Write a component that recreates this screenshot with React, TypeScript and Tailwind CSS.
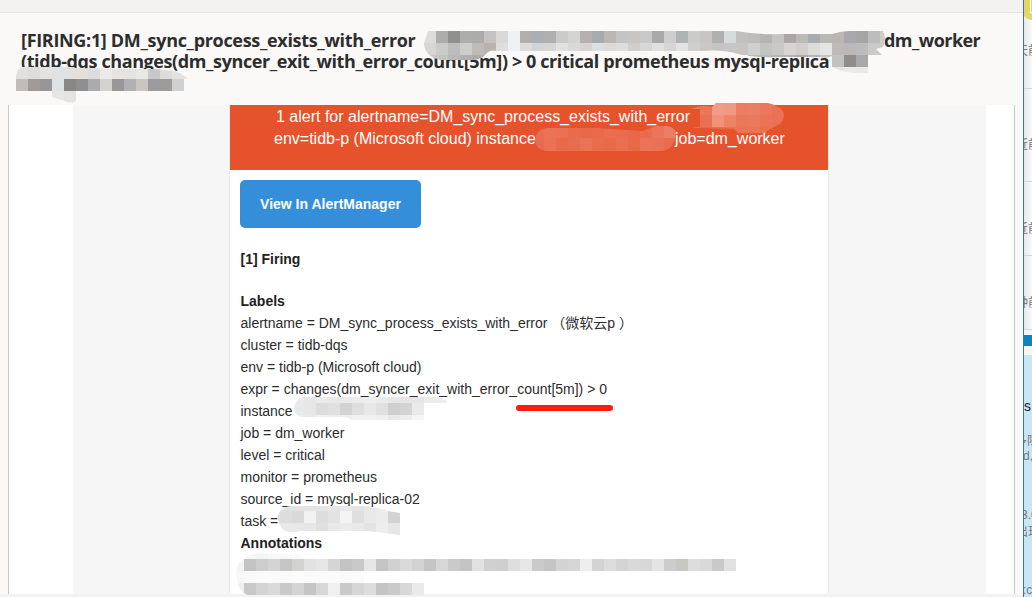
interface MosaicProps {
  id: string
  x: number
  y: number
  rows: string[]
  shape: string
}

const CELL = 12

// every row is a list of colours, one for each 12px cell, "-" leaves a hole
function Mosaic({ id, x, y, rows, shape }: MosaicProps) {
  return (
    <g clipPath={`url(#${id})`} shapeRendering="crispEdges">
      <clipPath id={id}>
        <path d={shape} />
      </clipPath>
      {rows.map((row, r) =>
        row.split(' ').map((color, c) =>
          color === '-' ? null : (
            <rect key={`${r}-${c}`} x={x + c * CELL} y={y + r * CELL} width={CELL} height={CELL} fill={`#${color}`} />
          )
        )
      )}
    </g>
  )
}

const mosaics: MosaicProps[] = [
  {
    id: 'subject-top',
    x: 424,
    y: 31,
    rows: [
      'dcdcdc adadab 90908e adadab acacab c4c3c1 dbd9d7 eef1f3 b1aeab a9afb4 b0b0b0 cbcbca d4d4d3 b5b1ae a7abae b9b8b5 c4c4c4 c8c5c3 c8c8c8 a9a9a8 cecece b0b3b4 cbcbca c8c6c4 b0b0ae d8dbdd c2c0bd bfbdb9 b5b4b2 c6c4c0 aaa7a4 bcbab7 a9acae b9b8b5 bab6b1 a9a9ad a5a5a8 bdbdbd d0cbc4',
      'd6d6d6 cbcbca bdbdbb cdcdcc c0bbb9 b9b3b0 dedede eef1f3 dedcda d2d4d6 d6d6d6 e1e1e0 dad9d8 d6d3d1 dce0e2 dcdbd9 dedede d0cecc d7d7d7 e0e0e0 d6d6d6 e2e2e2 cecece cac7c5 c4c4c2 c6c6c5 c7c5c2 cfd0d0 c3c3c1 c9c9c7 d7d5d3 d1cecb dcdcdb e5e5e5 bebab7 bbb8b7 bcbcbf cacaca d0cbc4',
      'c8c8c8 c4c4c4 b8b8b8 b0b0b4 acacab b5b5b3 - - - - - - - - - - - - - - - - - - - - - b9b9b8 b9b9b8 b5b5b4 b4b3b2 acacab b3b3b2 c4c4c3 d9d9db e1e1e1 dbdbdb e4e4e4 e6e6e6',
    ],
    shape:
      'M428 31 L736 31 Q758 35 780 34 L832 34 Q842 31 850 31 L883 31 Q887 40 883 47 L876 49 L882 55 L834 55 Q828 59 820 57 L782 57 Q754 58 738 54 Q724 49 700 51 L496 51 Q490 49 486 54 Q481 60 472 60 L440 60 Q424 56 424 43 Z',
  },
  {
    id: 'subject-right',
    x: 832,
    y: 55,
    rows: ['c2c2c0 8f8d8c a9a9a9 b3b4b6', 'e4e4e4 e9e9e9 e9e9e9 eeeeee'],
    shape: 'M832 55 H868 V73 Q846 74 832 67 Z',
  },
  {
    id: 'subject-bottom',
    x: 16,
    y: 67,
    rows: [
      'e1e0df dedddc e4e3e2 e0e1e2 e2e1e0 e6e0da dcdcdd ecebea e5e4e3 e4e4e3 e8e8e6 c8c8c8 dddcdb e2e2e2 e9e9e8',
      'bfbdb9 9f9b98 989795 dfe2e5 888785 8f8f92 aaabad d5d1cd 999896 afb1b4 c9c6bf 999b9e 9f9a96 ced0d2 -',
      '- - - e6e5e4 e3e3e2 e9e9e8 f3f3f2 - - - - - - - -',
      '- - - ebebea e5e5e4 e7e7e6 - - - - - - - - -',
    ],
    shape: 'M16 75 Q18 66 26 66 L66 66 L76 68 L146 69 Q180 68 188 79 L184 79 V91 H76 V101 Q70 104 65 101 L52 97 V91 H16 Z',
  },
  {
    id: 'banner-top',
    x: 688,
    y: 103,
    rows: [
      'e97358 e97759 ef9d88 f09a85 eb7d62 ec7e63 eb785c ea7356',
      'e86e4f e87153 ef937b ed8468 eb7759 eb7a5d eb7356 ea7153',
      'e86848 e86948 e97152 e97051 ea7454 ea7556 e97152 e86c4d',
    ],
    shape: 'M690 109 Q702 104 712 107 L716 103 L768 103 Q784 107 784 116 Q783 124 774 127 L764 133 L738 133 L734 129 L696 128 L692 127 L700 127 V109 Z',
  },
  {
    id: 'banner-bottom',
    x: 532,
    y: 126,
    rows: [
      'e96d50 ea7356 ea7154 e96b4d e9684a e86a4c e96e50 e96c4d e96849 ea6c4e eb755a ed7e64 ec775c',
      'e86d50 ea7153 ea6948 e86c4f ea7355 e96c4e e96948 ea6e51 e96848 ea7256 ea7156 ea6c4e ea6948',
      'e86d50 ea7153 ea6948 e86c4f ea7355 e96c4e e96948 ea6e51 e96848 ea7256 ea7156 ea6c4e ea6948',
    ],
    shape: 'M535 139 Q537 129 547 128 L596 128 L642 131 L656 126 Q672 124 676 132 Q675 150 661 151 L546 151 Q535 149 535 139 Z',
  },
  {
    id: 'instance',
    x: 292,
    y: 391,
    rows: [
      'e9e9e9 e6e6e6 ebebeb e9e9e9 eaeaea ececec eeeeee ebebeb e7e7e7 e6e6e6 e6e6e6 ebebeb ebebeb',
      'e9e9e9 e6e6e6 dcdcdc e0e0e0 d2d2d2 dedede e8e8e8 e0e0e0 cfcfcf d3d3d3 e9e9e9 - -',
      'f0f0f0 e9e9e9 eeeeee eeeeee ededed f1f1f1 f1f1f1 efefef e9e9e9 ededed f5f5f5 - -',
    ],
    shape: 'M294 409 Q295 398 304 397 L436 397 Q445 398 447 403 L424 403 V420 L352 420 L346 417 L302 417 Q294 415 294 409 Z',
  },
  {
    id: 'task',
    x: 268,
    y: 499,
    rows: [
      'e3e3e3 e3e3e3 e3e3e3 e3e3e3 e6e6e6 e6e6e6 e8e8e8 e3e3e3 e7e7e7 ebebeb e9e9e9 e9e9e9',
      'e0e0e0 dddddd d9d9d9 f2f2f2 dddddd e3e3e3 f4f4f4 dfdfdf e9e9e9 ececec d3d3d3 -',
      'e8e8e8 e8e8e8 e8e8e8 e6e6e6 dfdfdf e9e9e9 ebebeb e9e9e9 e3e3e3 ededed e7e7e7 -',
    ],
    shape: 'M277 518 Q280 506 292 506 L364 506 Q380 508 388 511 L400 513 V535 L384 533 L368 531 L300 531 Q282 536 279 522 Z',
  },
  {
    id: 'annotation-top',
    x: 232,
    y: 547,
    rows: [
      'f8f8f8 f6f6f6 f5f5f5 f8f8f8 f8f8f8 fafafa fafafa - - - - - - - - - - - - - - - - - - - - - - - - - - - - - - - - - - - - -',
      'f4f4f4 c3c3c3 cdcdcd d4d4d4 c6c6c6 d2d2d0 e2e2e2 e6e6e6 d5d5d5 c3c3c3 c9c9c9 e7e7e7 c5c5c5 d1d1d1 dadada d2d2d2 c5c5c5 d7d7d7 cacaca c4c4c4 e1e1e1 d0d0d0 cfcfcf dedede e7e7e7 cacaca c5c5c5 d3d3d3 d6d6d6 eeeeee d3d3d3 dcdcdc d4d4d4 d9d9d9 d8d8d8 e4e4e4 cccccc c7c7c4 dddddd d9d9d9 c9c9c9 e1e1e1',
      'f7f7f7 f9f9f9 fafafa fafafa fafafa fbfbfb fafafa fbfbfb fbfbfb fafafa fbfbfb - - - - - - - - - - - - - - - - - - - - - - - - - - - - - - -',
      'f0f0f0 c8c8c8 d4d4d4 dadada c9c9c9 d4d4d4 c5c5c5 d7d7d7 f0f0f0 c9c9c9 d6d6d6 dddddd c4c4c4 cacaca d8d8d8 eaeaea - - - - - - - - - - - - - - - - - - - - - - - - - -',
    ],
    shape: 'M236 575 Q235 558 257 553 L300 555 L306 559 H736 V571 H424 V595 H248 Q238 592 236 575 Z',
  },
]

const labels = [
  'alertname = DM_sync_process_exists_with_error （微软云p ）',
  'cluster = tidb-dqs',
  'env = tidb-p (Microsoft cloud)',
  'expr = changes(dm_syncer_exit_with_error_count[5m]) > 0',
  'instance',
  'job = dm_worker',
  'level = critical',
  'monitor = prometheus',
  'source_id = mysql-replica-02',
  'task =',
]

// sliver of the window behind the mail
function BackWindow() {
  return (
    <aside className="flex w-[9px] shrink-0 flex-col overflow-hidden border-l border-[#3972b0] bg-[#f6f6f6] text-[12px] leading-4 text-[#777] whitespace-nowrap font-['Noto_Sans_CJK_SC',sans-serif]">
      <div className="h-[89px] shrink-0 border-b border-[#d6d6d6] bg-linear-to-r from-[#e8e8e8] to-[#fafafa]">
        <svg className="block" width="8" height="22">
          <circle cx="10" cy="7" r="13.5" fill="#e5d468" />
          <path d="M6.5 0V13H8" fill="none" stroke="#fff" />
        </svg>
        <div className="mt-[20px] -ml-[8px]">天前</div>
      </div>
      <div className="h-[93px] shrink-0 border-b border-[#d6d6d6] bg-linear-to-r from-[#e8e8e8] to-[#fafafa] pt-[47px]">
        <div className="-ml-[8px]">近前</div>
      </div>
      <div className="h-[74px] shrink-0 border-b border-[#d6d6d6] bg-linear-to-r from-[#e8e8e8] to-[#fafafa] pt-[38px]">
        <div className="-ml-[8px]">近前</div>
      </div>
      <div className="h-[74px] shrink-0 border-b border-[#d6d6d6] bg-linear-to-r from-[#e8e8e8] to-[#fafafa] pt-[38px]">
        <div className="-ml-[8px]">钟前</div>
      </div>
      <div className="mt-[5px] h-[11px] shrink-0 bg-[#0785c9]"></div>
      <div className="mt-[9px] flex-1 bg-[#c9e6f4]">
        <div className="pt-[43px] text-[14px] text-[#222] font-['Liberation_Sans',sans-serif]">s</div>
        <div className="mt-[18px] -ml-[9px]">多隙</div>
        <div className="-ml-[1px] font-['Liberation_Sans',sans-serif]">d,</div>
        <div className="mt-[43px] -ml-[3px] font-['Liberation_Sans',sans-serif]">3.0</div>
        <div className="-ml-[8px]">出现</div>
        <div className="mt-[43px] -ml-[1px] font-['Liberation_Sans',sans-serif]">:c</div>
      </div>
    </aside>
  )
}

export default function App() {
  return (
    <div className="relative flex h-[597px] w-[1032px] overflow-hidden bg-[#faf9f8]">
      <div className="flex w-[1023px] shrink-0 flex-col">
        <div className="h-[13px] shrink-0 border-b border-[#e5e4e3] bg-[#f3f2f1]"></div>
        <h1 className="h-[92px] shrink-0 pt-[17px] pl-[21px] text-[18px] leading-[21px] font-bold tracking-[-0.4px] whitespace-nowrap text-[#2e2d2d] font-['Open_Sans','Noto_Sans',sans-serif]">
          <div className="flex">
            <span className="w-[863px] tracking-[-0.32px]">[FIRING:1] DM_sync_process_exists_with_error</span>
            <span className="tracking-[-0.55px]">dm_worker</span>
          </div>
          <div>{'(tidb-dqs changes(dm_syncer_exit_with_error_count[5m]) > 0 critical prometheus mysql-replica'}</div>
        </h1>
        <div className="mr-[8px] ml-[8px] flex h-[489px] shrink-0 border-x border-[#c8c8c8] bg-white pr-[28px] pl-[64px]">
          <div className="flex flex-1 bg-[#f6f6f6] pl-[156px] font-['Liberation_Sans','Noto_Sans_CJK_TC',sans-serif]">
            <main className="w-[600px] overflow-hidden border-x border-[#e9e9e9] bg-white text-[#212121] whitespace-nowrap">
              <div className="h-[65px] bg-[#e6522c] pt-px text-[16px] leading-[22px] text-white">
                <div className="pl-[46px]">1 alert for alertname=DM_sync_process_exists_with_error</div>
                <div className="flex pl-[44px]">
                  <span className="w-[401px]">env=tidb-p (Microsoft cloud) instance</span>
                  <span>job=dm_worker</span>
                </div>
              </div>
              <div className="p-[10px] text-[14px] leading-[22px]">
                <button className="block h-[48px] w-[181px] rounded-[5px] bg-[#348eda] text-center font-bold text-white">
                  View In AlertManager
                </button>
                <div className="pl-[0.5px]">
                  <div className="mt-5 font-bold">[1] Firing</div>
                  <div className="mt-5 font-bold">Labels</div>
                  {labels.map(label => (
                    <div className="text-[#2c2c2c]" key={label}>{label}</div>
                  ))}
                  <div className="font-bold">Annotations</div>
                </div>
              </div>
            </main>
          </div>
        </div>
        <div className="flex-1 bg-[#f2f2f2]"></div>
      </div>
      <BackWindow />
      {/* scribbles on top of the mail */}
      <svg className="pointer-events-none absolute inset-0" width="1032" height="597">
        {mosaics.map(m => (
          <Mosaic key={m.id} {...m} />
        ))}
        <path d="M519 408H610" stroke="#fd1d0f" strokeWidth="6" strokeLinecap="round" />
      </svg>
    </div>
  )
}
